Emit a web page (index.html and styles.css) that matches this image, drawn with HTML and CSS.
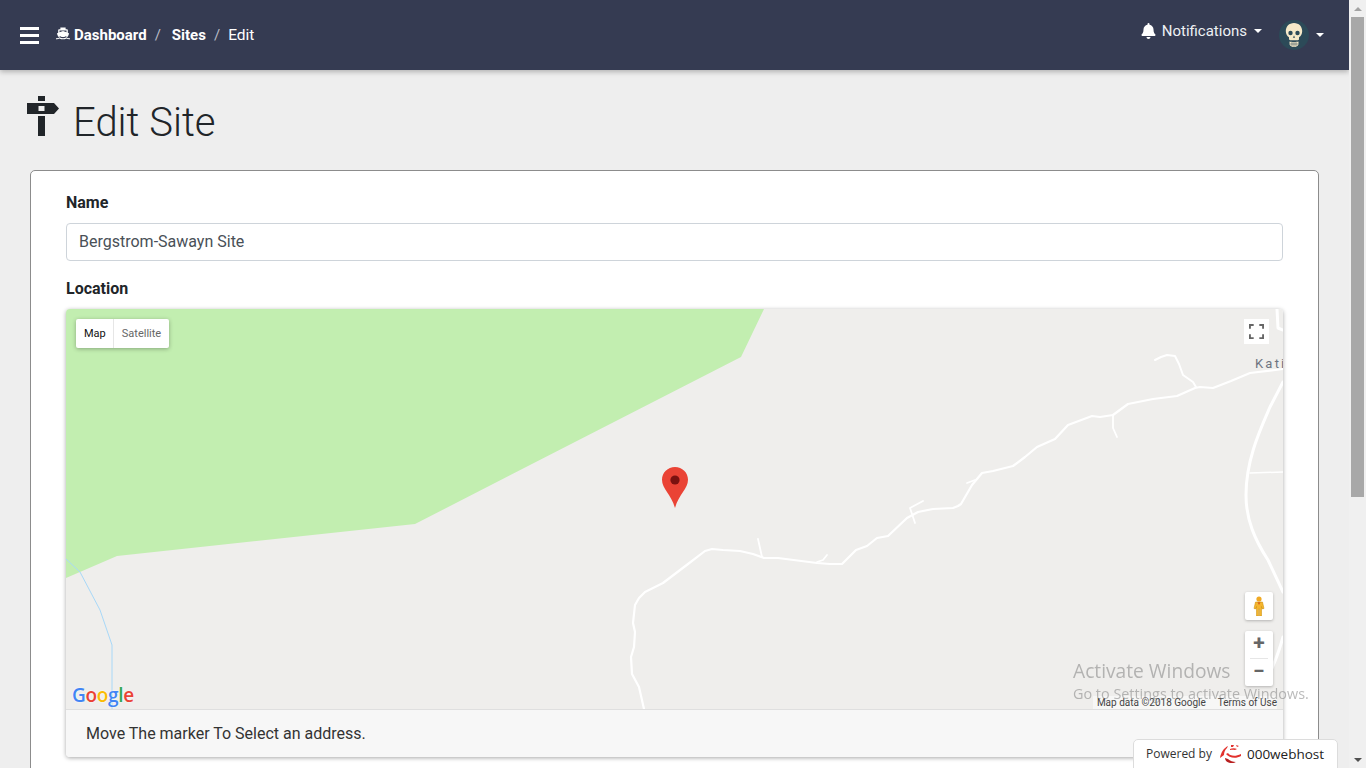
FILE: index.html
```html
<!DOCTYPE html>
<html lang="en">

<head>
    <meta charset="UTF-8" />
    <meta name="viewport" content="width=device-width, initial-scale=1.0" />
    <title>Edit Site</title>
    <link rel="stylesheet" href="styles.css">
</head>

<body>
    <div class="page">
        <header class="topbar">
            <button class="menu-btn" aria-label="Menu"><span></span><span></span><span></span></button>
            <nav class="crumbs">
                <a class="crumb-link" href="#">
                    <svg class="ship-icon" viewBox="0 0 16 14"><path d="M5 0h6v2h1.500a1 1 0 0 1 1 1v3.200L15 7l-1.500 3.800c-1 .2-1.800-.2-2.500-.8-1.800 1.300-4.200 1.300-6 0-.7.600-1.500 1-2.500.8L1 7l1.500-.8V3a1 1 0 0 1 1-1H5z M4 3.500v2l4-1.500 4 1.500v-2z" fill-rule="evenodd"/><path d="M0 12.300c1.500.4 3-.2 4-1 2.300 1.500 5.700 1.500 8 0 1 .8 2.500 1.400 4 1v1.200c-1.400.3-2.800-.1-4-.8-2.400 1.300-5.600 1.300-8 0-1.200.7-2.600 1.100-4 .8z"/></svg>
                    Dashboard</a>
                <span class="crumb-sep">/</span>
                <a class="crumb-link" href="#">Sites</a>
                <span class="crumb-sep">/</span>
                <span class="crumb-current">Edit</span>
            </nav>
            <div class="topbar-right">
                <a class="notif" href="#">
                    <svg class="bell-icon" viewBox="0 0 448 512"><path d="M224 512c35 0 64-29 64-64H160c0 35 29 64 64 64zm215-150c-19-21-55-52-55-154 0-78-54-140-128-155V32a32 32 0 1 0-64 0v21C118 68 64 130 64 208c0 102-36 133-55 154-6 6-9 14-9 22 0 16 13 32 32 32h384c19 0 32-16 32-32 0-8-3-16-9-22z"/></svg>
                    Notifications<i class="caret"></i>
                </a>
                <a class="user" href="#">
                    <span class="avatar">
                        <svg viewBox="0 0 30 30"><path d="M15 3c-5 0-8.200 3.600-8.200 8 0 3 1.200 5 3.200 6.300V19c0 .8.500 1.200 1.200 1.200h7.600c.7 0 1.200-.4 1.200-1.200v-1.700c2-1.300 3.200-3.300 3.200-6.300 0-4.400-3.200-8-8.200-8z" fill="#f5e9c8"/><ellipse cx="11.500" cy="13" rx="2.200" ry="2.300" fill="#2c4a58"/><ellipse cx="18.500" cy="13" rx="2.200" ry="2.300" fill="#2c4a58"/><path d="M15 15.500l-1.100 2.300h2.200z" fill="#2c4a58"/><path d="M10.500 21.500c1 .6 8 .6 9 0v3c-1 1.800-2.700 2.600-4.500 2.600s-3.500-.8-4.500-2.600z" fill="#f5e9c8"/><path d="M10.500 24h9M13 22v4.500M15 22v5M17 22v4.500" stroke="#2c4a58" stroke-width=".5"/></svg>
                    </span>
                    <i class="caret"></i>
                </a>
            </div>
        </header>

        <main class="content">
            <h1 class="page-title">
                <svg class="sign-icon" viewBox="0 0 32 40"><path d="M11 0h7v5h-7z M11 20h7v20h-7z"/><path d="M0 7h27l5 5.500-5 5.500H0z M11.500 10v5h6v-5z" fill-rule="evenodd"/></svg>
                Edit Site
            </h1>

            <section class="card">
                <form>
                    <label class="field-label" for="name">Name</label>
                    <input class="text-input" id="name" type="text" value="Bergstrom-Sawayn Site">
                    <label class="field-label location-label">Location</label>
                    <div class="map-card">
                        <div class="map">
                            <svg class="map-roads" viewBox="0 0 1217 400">
                                <!-- traced in page coordinates, hence the translate -->
                                <g transform="translate(-66 -309)">
                                    <polygon points="66,309 764,309 741,357 415,524 117,556 66,578" fill="#c2eeb0"/>
                                    <g fill="none" stroke="#fff" stroke-linejoin="round" stroke-linecap="round">
                                        <polyline stroke-width="2.200" points="644,709 639,687 632,674 631,657 634,647 635,632 633,623 635,605 639,598 645,592 663,583 688,564 705,551 712,549 723,550 740,551 753,554 764,558 778,558 817,563 830,564 842,564 856,550 867,546 877,538 888,536 907,518 918,512 933,509 953,508 958,506 961,504 972,485 982,473 993,471 1013,466 1025,457 1037,447 1055,439 1068,425 1092,416 1100,417 1113,415 1128,404 1153,399 1177,396 1195,388 1200,387 1213,388 1231,381 1250,373 1283,369"/>
                                        <polyline stroke-width="2" points="1155,360 1161,357 1167,355 1175,356 1179,364 1183,375 1193,382 1196,387"/>
                                        <polyline stroke-width="1.800" points="1113,415 1113,428 1117,437"/>
                                        <polyline stroke-width="1.800" points="967,483 975,480"/>
                                        <polyline stroke-width="1.800" points="923,501 910,508 915,523"/>
                                        <polyline stroke-width="1.800" points="758,539 762,557"/>
                                        <polyline stroke-width="1.800" points="817,562 823,560 827,555"/>
                                        <path stroke-width="3" d="M1283 382 1270 407C1260 430 1246 460 1246 495 1246 520 1255 540 1268 560L1283 592"/>
                                        <path stroke-width="1.500" d="M1250 473 1283 472"/>
                                        <path stroke-width="3" d="M1277 309 1278 328 1283 330"/>
                                        <path stroke-width="3" d="M1283 637Q1278 655 1272 668"/>
                                    </g>
                                    <path d="M66 559 80 572 100 610 112 645 112 709" fill="none" stroke="#a8d8f8" stroke-width="1"/>
                                </g>
                            </svg>

                            <div class="map-type">
                                <span class="map-type-btn is-active">Map</span>
                                <span class="map-type-btn">Satellite</span>
                            </div>

                            <button class="map-ctrl fullscreen" aria-label="Fullscreen">
                                <svg viewBox="0 0 16 16"><path d="M0 5V0h5v2H2v3z M11 0h5v5h-2V2h-3z M16 11v5h-5v-2h3v-3z M5 16H0v-5h2v3h3z" fill="#666"/></svg>
                            </button>

                            <span class="place-label">Kati</span>

                            <svg class="marker" viewBox="0 0 26 42">
                                <path d="M13 0C5.800 0 0 5.600 0 12.800 0 22 9 27 13 41c4-14 13-19 13-28.200C26 5.600 20.200 0 13 0z" fill="#ea4335"/>
                                <circle cx="13" cy="13" r="4.600" fill="#7b1210"/>
                            </svg>

                            <button class="map-ctrl pegman" aria-label="Street view">
                                <svg viewBox="0 0 12 20"><circle cx="6" cy="3" r="2.600" fill="#f0a923"/><path d="M2.500 6h7l1.500 6.500-1.800.4-.7-2.400V20H6.500v-7h-1v7H3.500v-9.500l-.7 2.400-1.800-.4z" fill="#f4b52e" stroke="#c98a00" stroke-width=".5"/><path d="M4.500 6.200h3L6 9z" fill="#d9601a"/></svg>
                            </button>

                            <div class="zoom-ctrl">
                                <button class="zoom-btn" aria-label="Zoom in">+</button>
                                <span class="zoom-div"></span>
                                <button class="zoom-btn" aria-label="Zoom out">&minus;</button>
                            </div>

                            <div class="google-logo"><span class="g-blue">G</span><span class="g-red">o</span><span class="g-yellow">o</span><span class="g-blue">g</span><span class="g-green">l</span><span class="g-red">e</span></div>

                            <div class="map-attr"><span>Map data ©2018 Google</span><span>Terms of Use</span></div>
                        </div>
                        <div class="map-foot">Move The marker To Select an address.</div>
                    </div>
                </form>
            </section>
        </main>
    </div>

    <div class="scrollbar">
        <span class="scroll-arrow"></span>
        <span class="scroll-thumb"></span>
        <span class="scroll-arrow down"></span>
    </div>

    <div class="activate">
        <div class="activate-title">Activate Windows</div>
        <div class="activate-sub">Go to Settings to activate Windows.</div>
    </div>

    <div class="powered">
        <span class="powered-text">Powered by</span>
        <svg class="host-logo" viewBox="0 0 24 20">
            <path d="M1 14C2 8 5 4 9 2L8 4C6 6 5 8 5 11z" fill="#e2312d"/>
            <path d="M6 14c0 3 3 5 7 5 2 0 3-.5 4-1-3 0-6-1-8-3z" fill="#b81f1f"/>
            <path d="M9 9c2 3 7 4 13 1v2c-5 3-12 2-15-2z" fill="#e2312d"/>
            <path d="M11 5c2-1 5-1 7 0l-2 1c-2-.5-3-.5-5 0z M12 1h3l-1 2h-2z M17 1l3 1-2 1z" fill="#e2312d"/>
        </svg>
        <span class="host-name">000webhost</span>
    </div>
</body>

</html>
```

FILE: styles.css
```css
html,
body {
    margin: 0;
    padding: 0;
    height: 100%;
    overflow: hidden;
}

body {
    display: flex;
    font-family: Roboto, 'Liberation Sans', sans-serif;
    background-color: #eeeeee;
    color: #212529;
}

a {
    color: inherit;
    text-decoration: none;
}

button {
    border: none;
    padding: 0;
    font-family: inherit;
}

.page {
    flex: 1;
    min-width: 0;
    height: 768px;
    overflow: hidden;
}

/* top bar */
.topbar {
    display: flex;
    align-items: center;
    height: 70px;
    padding: 0 20px;
    box-sizing: border-box;
    background-color: #353b52;
    color: #fff;
    box-shadow: 0 2px 5px rgba(0, 0, 0, 0.25);
}

.menu-btn {
    display: flex;
    flex-direction: column;
    gap: 4px;
    width: 19px;
    margin-right: 17px;
    background: none;
}

.menu-btn span {
    height: 3px;
    background-color: #fff;
}

.crumbs {
    display: flex;
    align-items: center;
    font-size: 15px;
}

.crumb-link {
    display: flex;
    align-items: center;
    font-weight: 700;
}

.ship-icon {
    width: 14px;
    height: 13px;
    margin-right: 4px;
    margin-top: -4px;
    fill: #fff;
}

.crumb-sep {
    margin: 0 11px 0 8px;
    color: #b9bcc6;
}

.crumb-current {
    margin-left: -3px;
    font-size: 15.500px;
}

.topbar-right {
    display: flex;
    align-items: center;
    margin-left: auto;
    margin-right: 5px;
}

.notif {
    display: flex;
    align-items: center;
    font-size: 15px;
    margin-top: -8px;
    color: #eef0f4;
}

.bell-icon {
    width: 15px;
    height: 16px;
    margin-right: 6px;
    fill: #fff;
}

.caret {
    display: inline-block;
    width: 0;
    height: 0;
    margin-left: 7px;
    border-top: 4px solid #fff;
    border-left: 4px solid transparent;
    border-right: 4px solid transparent;
}

.user {
    display: flex;
    align-items: center;
    margin-left: 17px;
}

.avatar {
    display: block;
    width: 30px;
    height: 30px;
    border-radius: 50%;
    background-color: #2c4a58;
}

.avatar svg {
    display: block;
    width: 100%;
    height: 100%;
}

.user .caret {
    margin-left: 7px;
}

/* content */
.content {
    padding: 0 30px;
}

.page-title {
    display: flex;
    align-items: center;
    height: 100px;
    box-sizing: border-box;
    padding-top: 4px;
    margin: 0 0 0 -3px;
    font-size: 40px;
    font-weight: 300;
    color: #212529;
}

.sign-icon {
    width: 32px;
    height: 40px;
    margin-right: 14px;
    margin-top: -12px;
    fill: #212529;
}

.card {
    width: 1289px;
    box-sizing: border-box;
    padding: 23px 35px 35px;
    background-color: #fff;
    border: 1px solid #8c8c8c;
    border-radius: 5px;
}

.field-label {
    display: block;
    margin-bottom: 11px;
    font-size: 16px;
    line-height: 18px;
    font-weight: 700;
}

.location-label {
    margin-top: 19px;
    margin-bottom: 11px;
}

.text-input {
    display: block;
    width: 100%;
    height: 38px;
    box-sizing: border-box;
    padding: 0 12px 2px;
    font-family: inherit;
    font-size: 16px;
    color: #495057;
    border: 1px solid #ced4da;
    border-radius: 4px;
}

/* map */
.map-card {
    border-radius: 4px;
    box-shadow: 0 1px 4px rgba(0, 0, 0, 0.35);
}

.map {
    position: relative;
    height: 400px;
    overflow: hidden;
    background-color: #efeeec;
    border-radius: 4px 4px 0 0;
}

.map-roads {
    position: absolute;
    left: 0;
    top: 0;
    width: 1217px;
    height: 400px;
}

.map-type {
    position: absolute;
    left: 10px;
    top: 10px;
    display: flex;
    height: 29px;
    background-color: #fff;
    border-radius: 2px;
    box-shadow: 0 1px 4px rgba(0, 0, 0, 0.3);
    font-size: 11px;
}

.map-type-btn {
    display: flex;
    align-items: center;
    padding: 0 8px;
    color: #666;
}

.map-type-btn.is-active {
    padding-right: 7px;
    color: #111;
    border-right: 1px solid #e6e6e6;
}

.map-ctrl {
    position: absolute;
    display: flex;
    align-items: center;
    justify-content: center;
    background-color: #fff;
}

.fullscreen {
    right: 14px;
    top: 10px;
    width: 25px;
    height: 25px;
}

.fullscreen svg {
    width: 15px;
    height: 15px;
}

.place-label {
    position: absolute;
    right: 0;
    top: 47px;
    width: 28px;
    overflow: hidden;
    font-size: 13px;
    letter-spacing: 2.200px;
    color: #6e7480;
    white-space: nowrap;
}

.marker {
    position: absolute;
    left: 596px;
    top: 158px;
    width: 26px;
    height: 42px;
}

.pegman {
    right: 10px;
    top: 283px;
    width: 28px;
    height: 28px;
    border-radius: 2px;
    box-shadow: 0 1px 3px rgba(0, 0, 0, 0.25);
}

.pegman svg {
    width: 12px;
    height: 20px;
}

.zoom-ctrl {
    position: absolute;
    right: 10px;
    top: 322px;
    display: flex;
    flex-direction: column;
    align-items: center;
    width: 28px;
    height: 55px;
    background-color: #fff;
    border-radius: 2px;
    box-shadow: 0 1px 3px rgba(0, 0, 0, 0.25);
}

.zoom-btn {
    width: 28px;
    height: 27px;
    padding-bottom: 2px;
    background: none;
    font-size: 21px;
    line-height: 23px;
    font-weight: 700;
    color: #666;
}

.zoom-div {
    width: 18px;
    height: 1px;
    background-color: #e6e6e6;
}

.google-logo {
    position: absolute;
    left: 6px;
    bottom: 2px;
    font-family: 'Open Sans', Roboto, sans-serif;
    font-size: 19px;
    line-height: 24px;
    font-weight: 600;
    letter-spacing: -0.3px;
    text-shadow: 0 0 2px #fff;
}

.g-blue { color: #4285f4; }
.g-red { color: #ea4335; }
.g-yellow { color: #fbbc05; }
.g-green { color: #34a853; }

.map-attr {
    position: absolute;
    right: 6px;
    bottom: 0;
    display: flex;
    gap: 12px;
    padding-left: 4px;
    font-size: 10px;
    line-height: 13px;
    color: #444;
    background-color: rgba(255, 255, 255, 0.5);
}

.map-foot {
    height: 48px;
    box-sizing: border-box;
    padding: 0 20px;
    line-height: 47px;
    font-size: 16px;
    color: #333;
    background-color: #f7f7f7;
    border-top: 1px solid #dfdfdf;
    border-radius: 0 0 4px 4px;
}

/* browser scrollbar */
.scrollbar {
    display: flex;
    flex-direction: column;
    align-items: center;
    flex: none;
    width: 17px;
    height: 768px;
    background-color: #f0f0f0;
}

.scroll-arrow {
    flex: none;
    width: 0;
    height: 0;
    margin: 7px 0 6px;
    border-bottom: 4px solid #a3a3a3;
    border-left: 4px solid transparent;
    border-right: 4px solid transparent;
}

.scroll-arrow.down {
    margin: auto 0 6px;
    border-bottom: none;
    border-top: 4px solid #505050;
}

.scroll-thumb {
    flex: none;
    width: 13px;
    height: 480px;
    background-color: #a8a8a8;
}

/* overlays */
.activate {
    position: fixed;
    left: 1073px;
    top: 659px;
    color: rgba(120, 120, 120, 0.5);
    pointer-events: none;
    font-family: 'Open Sans', Roboto, sans-serif;
}

.activate-title {
    font-size: 19.200px;
    line-height: 24px;
}

.activate-sub {
    font-size: 14.400px;
    line-height: 22px;
    white-space: nowrap;
}

.powered {
    position: fixed;
    left: 1133px;
    top: 739px;
    display: flex;
    align-items: center;
    width: 205px;
    height: 32px;
    box-sizing: border-box;
    padding: 0 12px 3px;
    font-family: 'Open Sans', Roboto, sans-serif;
    color: #333;
    background-color: #fff;
    border: 1px solid #dcdcdc;
    border-radius: 5px 5px 0 0;
}

.powered-text {
    flex: none;
    font-size: 12px;
    white-space: nowrap;
}

.host-logo {
    flex: none;
    width: 24px;
    height: 20px;
    margin: 0 4px 0 7px;
}

.host-name {
    flex: none;
    font-size: 13.500px;
    color: #222;
}
```
